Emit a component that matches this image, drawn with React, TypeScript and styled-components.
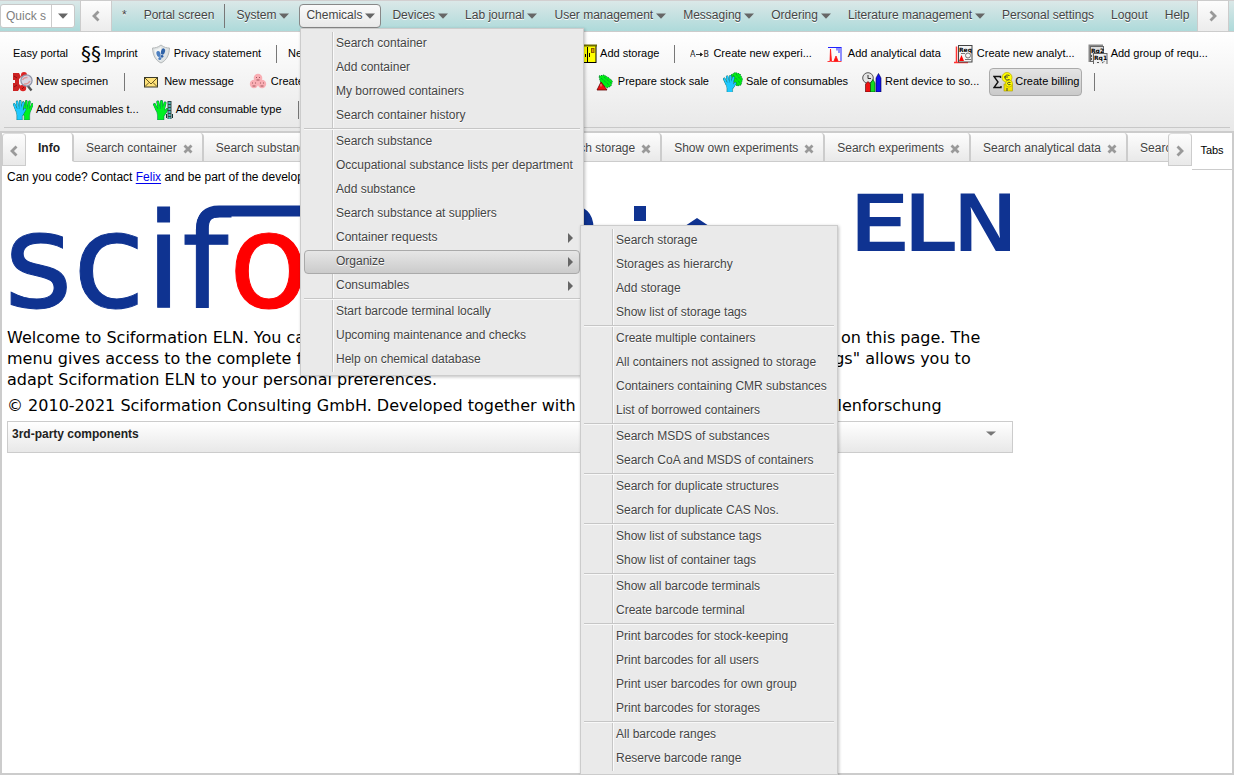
import React from "react";
import styled, { createGlobalStyle, css } from "styled-components";

const sans = `"Liberation Sans", Arial, sans-serif`;
const line = "#cccccc";

const GlobalStyle = createGlobalStyle`
  * { box-sizing: border-box; }
  html, body { margin: 0; }
  body { font: 12px/16px ${sans}; color: #000; background: #fff; overflow: hidden; }
  button, input { font: inherit; margin: 0; }
  button { cursor: pointer; }
`;

const Page = styled.div`
  position: relative;
  display: flex;
  flex-direction: column;
  min-height: 100vh;
`;

/* ---------- menu bar ---------- */

const MenuBar = styled.nav`
  display: flex;
  align-items: center;
  height: 32px;
  border-top: 1px solid #d2cfd0;
  border-bottom: 1px solid ${line};
  background: linear-gradient(#dbe8e8, #aedada);
  white-space: nowrap;
`;

const QuickSearch = styled.form`
  display: flex;
  flex: none;
  width: 75px;
  height: 24px;
  border: 1px solid #c8c8c8;
  border-radius: 3px;
  background: #fff;
  margin-right: 5px;
`;

const QuickInput = styled.input`
  width: 51px;
  border: 0;
  border-right: 1px solid ${line};
  padding: 0 5px;
  background: transparent;
  outline: none;
  &::placeholder { color: #808080; opacity: 1; }
`;

const QuickToggle = styled.button`
  flex: 1;
  display: flex;
  align-items: center;
  justify-content: center;
  border: 0;
  padding: 0;
  background: transparent;
`;

const BarScroll = styled.button`
  flex: none;
  display: flex;
  align-items: center;
  justify-content: center;
  width: 32px;
  height: 32px;
  padding: 0;
  border: 1px solid ${line};
  background: linear-gradient(#fdfdfd, #ececec);
`;

const BarItems = styled.div`
  flex: 1;
  display: flex;
  align-items: center;
  gap: 4px;
  padding-left: 3px;
  overflow: hidden;
`;

const BarItem = styled.button<{ $open?: boolean }>`
  flex: none;
  display: flex;
  align-items: center;
  gap: 3px;
  height: 24px;
  padding: 0 5px 2px 6px;
  border: 1px solid transparent;
  border-radius: 4px;
  background: transparent;
  color: #444;
  text-shadow: 0 1px 0 #fff;
  & > svg { margin-top: 2px; }
  ${(p) => p.$open && css`
    border-color: #888;
    background: linear-gradient(#fafafa, #e9e9e9);
  `}
`;

const BarDivider = styled.span`
  flex: none;
  width: 1px;
  height: 24px;
  background: #777;
`;

const BarEnd = styled.div`
  flex: none;
  width: 5px;
`;

/* ---------- toolbar ---------- */

const Toolbar = styled.div`
  display: flex;
  flex-direction: column;
  height: 99px;
  padding: 8px 4px 0;
  background: linear-gradient(#ffffff, #e8e8e8);
`;

const ToolRow = styled.div<{ $gap?: number }>`
  display: flex;
  align-items: center;
  gap: ${(p) => p.$gap ?? 6}px;
  height: 28px;
  padding-left: 5px;
  white-space: nowrap;
  overflow: hidden;
`;

const ToolRule = styled.div`
  border-top: 1px solid #c8c8c8;
  margin-top: 3px;
`;

const ToolButton = styled.button<{ $active?: boolean }>`
  flex: none;
  display: flex;
  align-items: center;
  gap: 3px;
  height: 28px;
  padding: 0 3px;
  border: 1px solid transparent;
  border-radius: 4px;
  background: transparent;
  color: #000;
  font-size: 11px;
  line-height: 14px;
  & > span { padding-bottom: 2px; }
  ${(p) => p.$active && css`
    gap: 2px;
    padding-right: 2px;
    border-color: #aaa;
    background: linear-gradient(#e4e4e4, #cacaca);
  `}
`;

const ToolDivider = styled.span<{ $tight?: boolean }>`
  flex: none;
  width: 1px;
  height: 18px;
  margin: 0 ${(p) => (p.$tight ? 2 : 6)}px 0 6px;
  background: #777;
`;

const ToolGroup = styled.div<{ $width: number }>`
  flex: none;
  display: flex;
  gap: 6px;
  width: ${(p) => p.$width}px;
  overflow: hidden;
`;

/* ---------- tabs ---------- */

const Workspace = styled.main`
  position: relative;
  flex: 1;
  border: 2px solid ${line};
`;

const TabStrip = styled.div`
  display: flex;
  align-items: flex-start;
  height: 36px;
`;

const TabScroll = styled.button`
  flex: none;
  display: flex;
  align-items: center;
  justify-content: center;
  width: 24px;
  height: 33px;
  padding: 2px 0 0;
  border: 1px solid ${line};
  border-top-color: #ddd;
  border-radius: 4px 4px 0 0;
  background: linear-gradient(#fdfdfd, #e9e9e9);
`;

const TabList = styled.div`
  flex: 1;
  display: flex;
  height: 29px;
  overflow: hidden;
  white-space: nowrap;
`;

const Tab = styled.div<{ $active?: boolean; $width?: number }>`
  flex: none;
  display: flex;
  align-items: center;
  gap: 6px;
  height: 29px;
  ${(p) => p.$width && css`width: ${p.$width}px;`}
  padding: 1px 9px 0 12px;
  border-right: 2px solid ${line};
  border-bottom: 1px solid ${line};
  border-radius: 4px 4px 0 0;
  background: linear-gradient(#fdfdfd, #e9e9e9);
  ${(p) => p.$active && css`
    padding-right: 12px;
    border-bottom-color: #fff;
    background: #fff;
  `}
`;

const TabLabel = styled.button<{ $active?: boolean }>`
  padding: 0;
  border: 0;
  background: transparent;
  color: ${(p) => (p.$active ? "#222" : "#444")};
  font-weight: ${(p) => (p.$active ? "bold" : "normal")};
  text-shadow: 0 1px 0 #fff;
`;

const TabClose = styled.button`
  display: flex;
  padding: 2px 0 0;
  border: 0;
  background: transparent;
`;

const TabsMenu = styled.button`
  flex: none;
  width: 40px;
  height: 37px;
  padding: 0 0 2px;
  border: 0;
  border-bottom: 1px solid ${line};
  background: #fff;
  font-size: 11px;
`;

/* ---------- content ---------- */

const Content = styled.section`
  display: flex;
  flex-direction: column;
  max-width: 1011px;
  padding-left: 5px;
`;

const Notice = styled.p`
  margin: 0;
  white-space: nowrap;
`;

const NoticeLink = styled.a`
  color: #0000ee;
  text-underline-offset: 2px;
`;

const Logo = styled.svg`
  display: block;
  width: 1006px;
  height: 142px;
`;

const Copy = styled.p`
  margin: 0 0 5px;
  font: 16px/21px "DejaVu Sans", Verdana, sans-serif;
  white-space: pre-line;
`;

const Fold = styled.button`
  display: flex;
  justify-content: space-between;
  align-items: flex-start;
  height: 32px;
  padding: 4px 16px 0 4px;
  border: 1px solid ${line};
  background: linear-gradient(#ffffff, #e8e8e8);
  color: #222;
  font-weight: bold;
  & > svg { margin-top: 5px; }
`;

/* ---------- drop-down menus ---------- */

const Popup = styled.div<{ $x: number; $y: number; $w: number }>`
  position: absolute;
  left: ${(p) => p.$x}px;
  top: ${(p) => p.$y}px;
  width: ${(p) => p.$w}px;
  padding: 3px;
  border: 1px solid ${line};
  background: #eaeaea;
  box-shadow: 1px 1px 3px rgba(0, 0, 0, 0.25);
`;

const PopupBody = styled.div`
  display: flex;
  flex-direction: column;
  background: linear-gradient(90deg, #c6c6c6 1px, #fafafa 1px) 28px 0 / 2px 100% no-repeat;
`;

const PopupItem = styled.button<{ $active?: boolean }>`
  display: flex;
  align-items: center;
  justify-content: space-between;
  height: 24px;
  padding: 0 6px 2px 31px;
  border: 1px solid transparent;
  border-radius: 4px;
  background: transparent;
  color: #444;
  text-shadow: 0 1px 0 #fff;
  white-space: nowrap;
  & > svg { margin-top: 2px; }
  ${(p) => p.$active && css`
    border-color: #aaa;
    background: linear-gradient(#e6e6e6, #cbcbcb);
  `}
`;

const PopupRule = styled.div`
  height: 2px;
  border-top: 1px solid #c6c6c6;
  border-bottom: 1px solid #f8f8f8;
`;

/* ---------- small glyphs ---------- */

const Down = ({ w = 10, h = 6, fill = "#666" }) => (
  <svg width={w} height={h} viewBox="0 0 10 6" preserveAspectRatio="none"><path d="M0 0.5H10L5 5.8Z" fill={fill} /></svg>
);
const Right = () => (
  <svg width="5" height="10" viewBox="0 0 5 10"><path d="M0 0L5 5L0 10Z" fill="#666" /></svg>
);
const Chevron = ({ right = false }) => (
  <svg width="8" height="12" viewBox="0 0 8 12">
    <path d={right ? "M1.5 1.5L6 6L1.5 10.5" : "M6.5 1.5L2 6L6.5 10.5"} fill="none" stroke="#999" strokeWidth="2.8" />
  </svg>
);
const Cross = () => (
  <svg width="10" height="10" viewBox="0 0 10 10"><path d="M1.5 1.5L8.5 8.5M8.5 1.5L1.5 8.5" stroke="#999" strokeWidth="2.8" /></svg>
);

/* ---------- toolbar icons ---------- */

const Icon = ({ children }: { children: React.ReactNode }) => (
  <svg width="20" height="20" viewBox="0 0 20 20">{children}</svg>
);

const HandShape = ({ fill }: { fill: string }) => (
  <g>
    <path d="M4 10L1.500 4.500M6 8L4.800 2M8.500 8V1.500M10.500 9L12 3M11 14L14 9.500" stroke="#0a6a5a" strokeWidth="2.900" strokeLinecap="round" />
    <path d="M3 8.500L4.500 15V20H11V16L13 12L11 8Z" fill={fill} stroke="#0a6a5a" strokeWidth="0.500" />
    <path d="M4 10L1.500 4.500M6 8L4.800 2M8.500 8V1.500M10.500 9L12 3M11 14L14 9.500" stroke={fill} strokeWidth="2.200" strokeLinecap="round" />
    <path d="M4 9H11V15H5Z" fill={fill} />
  </g>
);

const Paragraphs = () => (
  <Icon><text x="0" y="16" fontSize="20" fontFamily="DejaVu Sans">§§</text></Icon>
);
const Shield = () => (
  <Icon>
    <path d="M10 1C7 3.500 4 4 1.500 4C2 11 4 16 10 19C16 16 18 11 18.500 4C16 4 13 3.500 10 1Z" fill="#dfe3e4" stroke="#b4b8b9" />
    <path d="M10 3C8 5 5.500 5.500 3.500 5.500C4 11 5.500 14.500 10 17Z" fill="#f3f5f5" />
    <ellipse cx="7.500" cy="10" rx="2" ry="3" fill="#4d7fc0" transform="rotate(-15 7.5 10)" />
    <ellipse cx="12" cy="7.500" rx="2" ry="3.200" fill="#2f62a8" transform="rotate(15 12 7.500)" />
    <circle cx="8.800" cy="14.500" r="1.500" fill="#4d7fc0" /><circle cx="11" cy="12.300" r="1.400" fill="#2f62a8" />
  </Icon>
);
const Lockers = () => (
  <Icon>
    <rect x="0.500" y="1.500" width="18.500" height="17" fill="#ff0" stroke="#000" />
    <path d="M0 1.500H20" stroke="#6b6b00" strokeWidth="2" />
    <path d="M5.500 3V18M10.500 3V18M4 10V13M8.500 10V13M12.500 9V13" stroke="#000" />
    <rect x="14.500" y="4.500" width="2.500" height="4" fill="#d9a000" stroke="#8a5a00" />
  </Icon>
);
const Reaction = () => (
  <Icon>
    <text x="0" y="13" fontSize="8" fontFamily="DejaVu Sans" fill="#222">A</text>
    <text x="13.500" y="13" fontSize="8" fontFamily="DejaVu Sans" fill="#222">B</text>
    <path d="M6 10.500H12M10.500 9L12.500 10.500L10.500 12Z" stroke="#222" strokeWidth="0.900" fill="#222" />
  </Icon>
);
const Spectrum = () => (
  <Icon>
    <path d="M3 3.500H16.500M12 3.500V6.500M14 3.500V9M16 3.500V17" stroke="#22f" fill="none" />
    <path d="M2.500 17.500H5L5.500 5L6.500 17.500H16.500M9 17L11 12L13 17Z" stroke="#f11" fill="#f11" strokeWidth="0.800" />
  </Icon>
);
const Request = () => (
  <Icon>
    <path d="M2.500 2.500V18M0 18.500H14" stroke="#f33" strokeWidth="1.500" fill="none" />
    <rect x="4.500" y="1.500" width="13.500" height="16.500" fill="#f4f4f4" stroke="#444" />
    <text x="5" y="7.500" fontSize="6" fontWeight="bold" fontFamily="DejaVu Sans">Req</text>
    <circle cx="14" cy="11.500" r="2.500" fill="none" stroke="#777" />
    <path d="M7 9.500H11M11 15.500H17" stroke="#777" />
    <path d="M5 17L7.500 11L10 17Z" fill="#f00" />
  </Icon>
);
const RequestGroup = () => (
  <Icon>
    <path d="M1.500 18V1.500H15" stroke="#888" strokeWidth="2" fill="none" />
    <rect x="2.500" y="2.500" width="13" height="15" fill="#ddd" stroke="#666" />
    <text x="3" y="8.500" fontSize="6" fontWeight="bold" fontFamily="DejaVu Sans">Rq2</text>
    <rect x="5.500" y="9.500" width="13.500" height="11" fill="#f0f0f0" stroke="#666" />
    <path d="M3.500 11V17M9 18.500H12M14 19L17 17" stroke="#555" strokeDasharray="2 1" />
    <text x="6" y="15.500" fontSize="6" fontWeight="bold" fontFamily="DejaVu Sans">Rq1</text>
  </Icon>
);
const Specimen = () => (
  <Icon>
    <path d="M0 1H6L8 5L5 8H0ZM0 11H5L8 14L5 19H0ZM2 7H6V13H2Z" fill="#cc2222" />
    <circle cx="11" cy="3" r="3" fill="#d22" /><circle cx="10" cy="16" r="3.200" fill="#d22" />
    <path d="M1 4L4 6M1 15L4 13M9 17L11 15" stroke="#8c1010" />
    <path d="M14.500 13.500L18.500 18.500" stroke="#555" strokeWidth="2.400" />
    <circle cx="13.500" cy="8.500" r="5.600" fill="#d8d6e2" stroke="#8d93a6" strokeWidth="1.200" />
    <path d="M9.500 8Q11 5 14.500 5.500M11 12Q15 12.500 17 9" stroke="#d99" fill="none" strokeWidth="1.500" />
  </Icon>
);
const Envelope = () => (
  <Icon>
    <rect x="3.500" y="5.500" width="13" height="9.500" fill="#ffe27a" stroke="#3a3a2a" />
    <path d="M4 6L10 12L16 6M4 14.500L8 10.500M16 14.500L12 10.500" stroke="#6a5a20" fill="none" />
  </Icon>
);
const Cells = () => (
  <Icon>
    <g fill="#f9aeb4">
      <circle cx="10" cy="6" r="4.300" /><circle cx="6" cy="12" r="4.200" /><circle cx="14" cy="12" r="4.200" />
    </g>
    <path d="M8 5.500H9M11 5.500H12M8.500 8H11.500M4 11H5M7 11H8M4.500 14H7.500M12 11H13M15 11H16M12.500 14H15.500" stroke="#a0585f" />
  </Icon>
);
const StockSale = () => (
  <Icon>
    <path d="M4 4L9 3L14 6L17.500 9L16 14L12 16L8 13L5 9Z" fill="#0e1" stroke="#073" strokeDasharray="1 1" />
    <path d="M6 6L14 13M9 5L16 11" stroke="#084" strokeDasharray="1 1" />
    <path d="M2 18L6 10L12 18Z" fill="#e11" stroke="#600" strokeWidth="0.800" />
    <path d="M6 12V14.500" stroke="#fff" strokeWidth="0.600" />
  </Icon>
);
const ConsumableSale = () => (
  <Icon>
    <path d="M8 3L12 0.500L17 2L19.500 7L18 13L14 14L10 9Z" fill="#0e1" stroke="#073" strokeDasharray="1 1" />
    <path d="M10 3L17 11M13 2L18 8M10 7L15 13" stroke="#084" strokeDasharray="1 1" />
    <g transform="translate(0 3) scale(.87)"><HandShape fill="#1fc8ff" /></g>
  </Icon>
);
const Rental = () => (
  <Icon>
    <circle cx="6" cy="6" r="5.300" fill="#e4e4e4" stroke="#555" /><path d="M6 3V6.500H9" stroke="#333" fill="none" />
    <path d="M3.500 20V12L6 9.500L8.500 12V20Z" fill="#e11" stroke="#400" strokeWidth="0.600" />
    <path d="M8.500 20V11L11 7.500L13 11V20Z" fill="#1d2" stroke="#040" strokeWidth="0.600" />
    <path d="M14 20V6L16.500 1.500L19 6V20Z" fill="#11e" stroke="#004" strokeWidth="0.600" />
  </Icon>
);
const Billing = () => (
  <Icon>
    <path d="M7.500 6V4.500H1L5 10L1 15.500H8V14" stroke="#111" strokeWidth="1.400" fill="none" />
    <rect x="11" y="12" width="8.500" height="7" fill="#f0e400" stroke="#a89a00" strokeWidth="0.600" />
    <circle cx="14" cy="5.500" r="5" fill="#ff0" stroke="#b8a800" strokeWidth="0.700" />
    <circle cx="16" cy="11.500" r="3.500" fill="#ff0" stroke="#b8a800" strokeWidth="0.700" />
    <path d="M16.500 3.500Q12 2 12 5.500Q12 9 16.500 7.500M11 5H15M17.500 10.500Q14.500 9.500 14.500 11.500Q15 13.500 17.500 12.500M14 16V19" stroke="#333" fill="none" strokeWidth="0.900" />
  </Icon>
);
const Gloves = () => (
  <Icon>
    <g transform="translate(20.500 0) scale(-.85 1)"><HandShape fill="#00f020" /></g>
    <g transform="scale(.85 1)"><HandShape fill="#1fc8ff" /></g>
  </Icon>
);
const GloveType = () => (
  <Icon>
    <HandShape fill="#00f020" />
    <path d="M16.500 1V19" stroke="#344" strokeWidth="4" />
    <path d="M16.500 2V19" stroke="#4fb9b9" strokeWidth="2.200" strokeDasharray="2 1" />
    <path d="M13.500 14V18M19.500 14V18" stroke="#133" />
  </Icon>
);

const Tool = ({ icon, label, active }: { icon?: React.ReactNode; label: string; active?: boolean }) => (
  <ToolButton type="button" $active={active}>{icon}<span>{label}</span></ToolButton>
);

/* ---------- data ---------- */

type Entry = { label: string; sub?: boolean; active?: boolean };

const chemicals: Entry[][] = [
  ["Search container", "Add container", "My borrowed containers", "Search container history"].map((label) => ({ label })),
  [
    { label: "Search substance" },
    { label: "Occupational substance lists per department" },
    { label: "Add substance" },
    { label: "Search substance at suppliers" },
    { label: "Container requests", sub: true },
    { label: "Organize", sub: true, active: true },
    { label: "Consumables", sub: true },
  ],
  ["Start barcode terminal locally", "Upcoming maintenance and checks", "Help on chemical database"].map((label) => ({ label })),
];

const organize: Entry[][] = [
  ["Search storage", "Storages as hierarchy", "Add storage", "Show list of storage tags"],
  ["Create multiple containers", "All containers not assigned to storage", "Containers containing CMR substances", "List of borrowed containers"],
  ["Search MSDS of substances", "Search CoA and MSDS of containers"],
  ["Search for duplicate structures", "Search for duplicate CAS Nos."],
  ["Show list of substance tags", "Show list of container tags"],
  ["Show all barcode terminals", "Create barcode terminal"],
  ["Print barcodes for stock-keeping", "Print barcodes for all users", "Print user barcodes for own group", "Print barcodes for storages"],
  ["All barcode ranges", "Reserve barcode range"],
].map((group) => group.map((label) => ({ label })));

const barMenus = ["System", "Chemicals", "Devices", "Lab journal", "User management", "Messaging", "Ordering", "Literature management"];

const tabs: { label: string; width?: number }[] = [
  { label: "Search container" },
  { label: "Search substance" },
  { label: "Search container requests", width: 203 },
  { label: "Search storage" },
  { label: "Show own experiments" },
  { label: "Search experiments" },
  { label: "Search analytical data" },
  { label: "Search requests" },
];

const Menu = ({ x, y, w, groups }: { x: number; y: number; w: number; groups: Entry[][] }) => (
  <Popup $x={x} $y={y} $w={w} role="menu">
    <PopupBody>
      {groups.map((group, i) => (
        <React.Fragment key={i}>
          {i > 0 && <PopupRule />}
          {group.map((entry) => (
            <PopupItem key={entry.label} type="button" role="menuitem" $active={entry.active}>
              {entry.label}
              {entry.sub && <Right />}
            </PopupItem>
          ))}
        </React.Fragment>
      ))}
    </PopupBody>
  </Popup>
);

export default function App() {
  return (
    <Page>
      <GlobalStyle />
      <MenuBar>
        <QuickSearch>
          <QuickInput aria-label="Quick search" placeholder="Quick search" />
          <QuickToggle type="button" aria-label="Search options"><Down /></QuickToggle>
        </QuickSearch>
        <BarScroll type="button" aria-label="Scroll left"><Chevron /></BarScroll>
        <BarItems>
          <BarItem type="button">*</BarItem>
          <BarItem type="button">Portal screen</BarItem>
          <BarDivider />
          {barMenus.map((label) => (
            <BarItem key={label} type="button" $open={label === "Chemicals"}>{label}<Down /></BarItem>
          ))}
          <BarItem type="button">Personal settings</BarItem>
          <BarItem type="button">Logout</BarItem>
          <BarItem type="button">Help</BarItem>
        </BarItems>
        <BarScroll type="button" aria-label="Scroll right"><Chevron right /></BarScroll>
        <BarEnd />
      </MenuBar>

      <Toolbar>
        <ToolRow $gap={5}>
          <Tool label="Easy portal" />
          <Tool icon={<Paragraphs />} label="Imprint" />
          <Tool icon={<Shield />} label="Privacy statement" />
          <ToolDivider $tight />
          <ToolGroup $width={284}><Tool label="New container" /></ToolGroup>
          <Tool icon={<Lockers />} label="Add storage" />
          <ToolDivider />
          <Tool icon={<Reaction />} label="Create new experi..." />
          <Tool icon={<Spectrum />} label="Add analytical data" />
          <Tool icon={<Request />} label="Create new analyt..." />
          <Tool icon={<RequestGroup />} label="Add group of requ..." />
        </ToolRow>
        <ToolRow>
          <Tool icon={<Specimen />} label="New specimen" />
          <ToolDivider />
          <Tool icon={<Envelope />} label="New message" />
          <ToolGroup $width={341}><Tool icon={<Cells />} label="Create order" /></ToolGroup>
          <Tool icon={<StockSale />} label="Prepare stock sale" />
          <Tool icon={<ConsumableSale />} label="Sale of consumables" />
          <Tool icon={<Rental />} label="Rent device to so..." />
          <Tool icon={<Billing />} label="Create billing" active />
          <ToolDivider />
        </ToolRow>
        <ToolRow>
          <Tool icon={<Gloves />} label="Add consumables t..." />
          <Tool icon={<GloveType />} label="Add consumable type" />
          <ToolDivider />
        </ToolRow>
        <ToolRule />
      </Toolbar>

      <Workspace>
        <TabStrip>
          <TabScroll type="button" aria-label="Previous tabs"><Chevron /></TabScroll>
          <TabList>
            <Tab $active><TabLabel type="button" $active>Info</TabLabel></Tab>
            {tabs.map((tab) => (
              <Tab key={tab.label} $width={tab.width}>
                <TabLabel type="button">{tab.label}</TabLabel>
                <TabClose type="button" aria-label={`Close ${tab.label}`}><Cross /></TabClose>
              </Tab>
            ))}
          </TabList>
          <TabScroll type="button" aria-label="Next tabs"><Chevron right /></TabScroll>
          <TabsMenu type="button">Tabs</TabsMenu>
        </TabStrip>

        <Content>
          <Notice>
            Can you code? Contact <NoticeLink href="#felix">Felix</NoticeLink> and be part of the development team!
          </Notice>
          <Logo viewBox="7 185 1006 142" role="img" aria-label="Sciformation ELN">
            <g fontFamily="DejaVu Sans" fontSize="132" fill="#0f3391">
              <text x="4" y="307" stroke="#0f3391">scif<tspan fill="#f00" stroke="#f00">o</tspan></text>
            </g>
            <path d="M202 240V228Q202 211 219 211H571Q588 211 588 228V240" fill="none" stroke="#0f3391" strokeWidth="11" />
            <path d="M634 206H646V221H634ZM676 232L697 218L718 232Z" fill="#0f3391" />
            <text x="852 906 955" y="251" fontFamily="Liberation Sans" fontWeight="bold" fontSize="84" fill="#0f3391">ELN</text>
          </Logo>
          <Copy>
            {"Welcome to Sciformation ELN. You can find the most important functions of the administrative program on this page. The\nmenu gives access to the complete functionality of your program. Also, the menu item \"Personal settings\" allows you to\nadapt Sciformation ELN to your personal preferences."}
          </Copy>
          <Copy>© 2010-2021 Sciformation Consulting GmbH. Developed together with the Max-Planck-Institut fuer Kohlenforschung</Copy>
          <Fold type="button">3rd-party components<Down h={5} fill="#777" /></Fold>
        </Content>
      </Workspace>

      <Menu x={300} y={28} w={284} groups={chemicals} />
      <Menu x={580} y={225} w={258} groups={organize} />
    </Page>
  );
}
